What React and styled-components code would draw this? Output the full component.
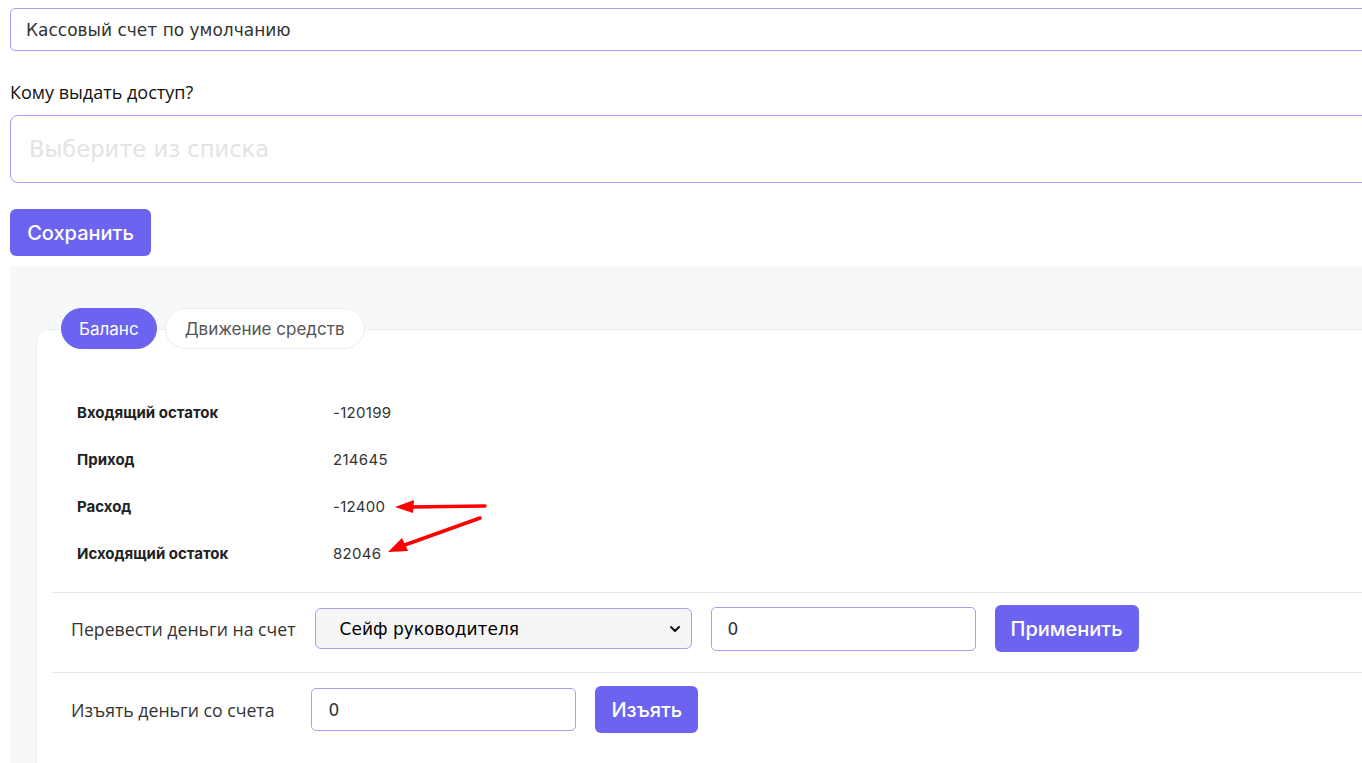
import React from 'react';
import styled, { createGlobalStyle } from 'styled-components';
import { ChevronDown } from 'lucide-react';

const Global = createGlobalStyle`
  html, body {
    margin: 0;
    padding: 0;
    background: #fff;
    overflow: hidden;
  }
  body {
    font-family: Inter, "Noto Sans", sans-serif;
  }
  * { box-sizing: border-box; }
`;

const Page = styled.div`
  position: relative;
  width: 1390px;
  padding: 8px 0 0 10px;
  height: 763px;
`;

const TextField = styled.input`
  display: block;
  width: 100%;
  height: ${(p) => p.$height || 43}px;
  border: 1px solid #a69ef7;
  border-radius: ${(p) => (p.$tall ? 8 : 5)}px;
  padding: 0 ${(p) => (p.$tall ? 18 : 15)}px;
  font-family: "DejaVu Sans", Verdana, sans-serif;
  font-size: ${(p) => (p.$tall ? 22.6 : 17)}px;
  color: #333;
  background: #fff;
  outline: none;

  &::placeholder {
    color: #e3e3e3;
  }
`;

const FieldLabel = styled.div`
  margin: 29px 0 11px;
  font-family: "Open Sans", "Noto Sans", sans-serif;
  font-size: 18px;
  color: #111;
  line-height: 24px;
`;

const Button = styled.button`
  height: ${(p) => p.$height || 47}px;
  width: ${(p) => (p.$width ? `${p.$width}px` : 'auto')};
  padding: 0 16px;
  border: none;
  border-radius: 6px;
  background: #6c63f0;
  color: #fff;
  font-family: Inter, sans-serif;
  font-size: 20px;
  font-weight: 500;
  cursor: pointer;
  flex-shrink: 0;
`;

const SaveRow = styled.div`
  margin-top: 26px;
`;

const Panel = styled.div`
  margin-top: 10px;
  background: #f7f8fa;
  padding: 42px 0 0 26px;
  height: 500px;
`;

const Tabs = styled.div`
  position: relative;
  z-index: 1;
  display: flex;
  gap: 8px;
  margin: 0 0 -20px 25px;
`;

const Tab = styled.div`
  display: flex;
  align-items: center;
  height: 41px;
  padding: 0 ${(p) => (p.$active ? 17 : 19)}px;
  border-radius: 21px;
  font-size: 17px;
  background: ${(p) => (p.$active ? '#6c63f0' : '#fff')};
  color: ${(p) => (p.$active ? '#fff' : '#555')};
  border: 1px solid ${(p) => (p.$active ? '#6c63f0' : '#e9edf3')};
`;

const Card = styled.div`
  background: #fff;
  border: 1px solid #e9edf3;
  border-right: none;
  border-bottom: none;
  border-radius: 12px 0 0 0;
  padding: 59px 0 0 15px;
  height: 480px;
`;

const Table = styled.div`
  padding: 0 0 15px 25px;
`;

const InfoRow = styled.div`
  display: flex;
  align-items: center;
  height: 47px;
  font-size: 15px;
`;

const InfoLabel = styled.div`
  width: 256px;
  font-weight: 700;
  color: #222;
`;

const InfoValue = styled.div`
  color: #333;
  letter-spacing: 0.3px;
`;

const ActionRow = styled.div`
  display: flex;
  align-items: center;
  gap: 19px;
  border-top: 1px solid #e6e6e6;
  padding: ${(p) => p.$pad || '13px 0 19px 19px'};
`;

const ActionLabel = styled.div`
  font-family: "Open Sans", "Noto Sans", sans-serif;
  font-size: 17.7px;
  color: #333;
  margin-right: ${(p) => p.$extra || 0}px;
`;

const SelectWrap = styled.div`
  position: relative;
  width: 377px;
  height: 41px;
`;

const Select = styled.select`
  appearance: none;
  width: 100%;
  height: 100%;
  border: 1px solid #a69ef7;
  border-radius: 6px;
  background: #f5f5f5;
  padding: 0 24px;
  font-family: "DejaVu Sans", Verdana, sans-serif;
  font-size: 17px;
  color: #000;
  outline: none;
`;

const Chevron = styled(ChevronDown)`
  position: absolute;
  right: 9px;
  top: 13px;
  pointer-events: none;
`;

const AmountInput = styled.input`
  width: 265px;
  height: ${(p) => p.$height || 44}px;
  border: 1px solid #a69ef7;
  border-radius: 5px;
  padding: 0 16px;
  font-family: "DejaVu Sans", Verdana, sans-serif;
  font-size: 17px;
  color: #333;
  outline: none;
`;

const Arrows = styled.svg`
  position: absolute;
  left: 380px;
  top: 495px;
  pointer-events: none;
`;

const rows = [
  ['Входящий остаток', '-120199'],
  ['Приход', '214645'],
  ['Расход', '-12400'],
  ['Исходящий остаток', '82046'],
];

export default function App() {
  return (
    <>
      <Global />
      <Page>
        <TextField defaultValue="Кассовый счет по умолчанию" $height={43} />
        <FieldLabel>Кому выдать доступ?</FieldLabel>
        <TextField placeholder="Выберите из списка" $height={68} $tall />
        <SaveRow>
          <Button $height={47} $width={141}>Сохранить</Button>
        </SaveRow>

        <Panel>
          <Tabs>
            <Tab $active>Баланс</Tab>
            <Tab>Движение средств</Tab>
          </Tabs>
          <Card>
            <Table>
              {rows.map(([label, value]) => (
                <InfoRow key={label}>
                  <InfoLabel>{label}</InfoLabel>
                  <InfoValue>{value}</InfoValue>
                </InfoRow>
              ))}
            </Table>

            <ActionRow $pad="12px 0 20px 19px">
              <ActionLabel>Перевести деньги на счет</ActionLabel>
              <SelectWrap>
                <Select defaultValue="safe">
                  <option value="safe">Сейф руководителя</option>
                </Select>
                <Chevron size={16} strokeWidth={3} color="#111" />
              </SelectWrap>
              <AmountInput defaultValue="0" />
              <Button>Применить</Button>
            </ActionRow>

            <ActionRow $pad="13px 0 19px 19px">
              <ActionLabel $extra={18}>Изъять деньги со счета</ActionLabel>
              <AmountInput defaultValue="0" $height={43} />
              <Button>Изъять</Button>
            </ActionRow>
          </Card>
        </Panel>

        <Arrows width="110" height="65" viewBox="0 0 110 65">
          <line x1="105" y1="11" x2="30" y2="12" stroke="#f00" strokeWidth="3.5" strokeLinecap="round" />
          <polygon points="15,12 34,5 33,18" fill="#f00" />
          <line x1="100" y1="23" x2="22" y2="51" stroke="#f00" strokeWidth="3.5" strokeLinecap="round" />
          <polygon points="8,57 22,43 28,56" fill="#f00" />
        </Arrows>
      </Page>
    </>
  );
}
